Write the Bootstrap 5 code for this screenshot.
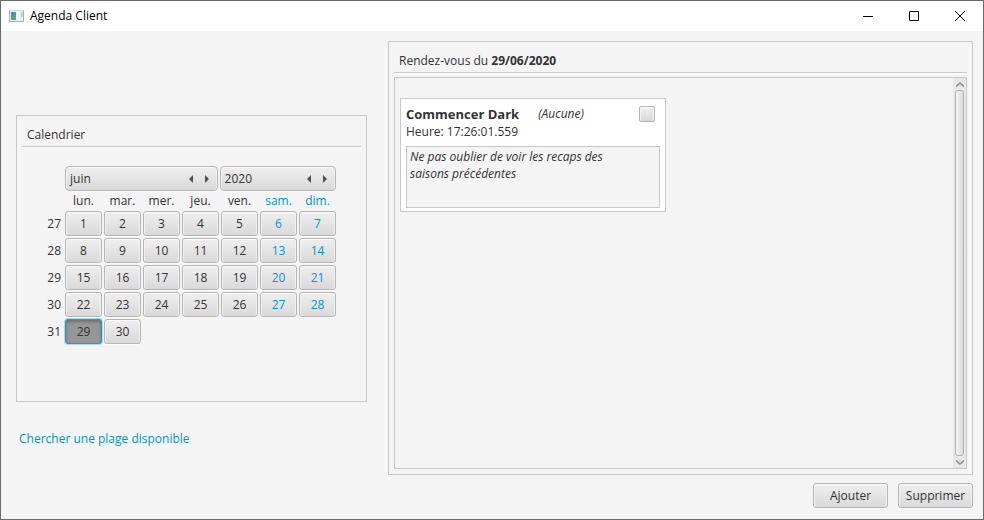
<!DOCTYPE html>
<html lang="fr">
<head>
<meta charset="utf-8">
<meta name="viewport" content="width=device-width, initial-scale=1">
<title>Agenda Client</title>
<link href="https://cdn.jsdelivr.net/npm/bootstrap@5.3.0/dist/css/bootstrap.min.css" rel="stylesheet">
<style>
  body { font: 12px/16px "Open Sans", "Noto Sans", sans-serif; color: #333; background: #f4f4f4; }
  .app-window { min-height: 100vh; border: 1px solid #6b6b6b; }
  .title-bar { height: 30px; background: #fff; color: #000; padding-left: 8px; }
  .title-bar button { width: 46px; height: 30px; border: 0; background: none; padding: 0; }
  .app-name { margin-left: 5px; }
  .title-bar svg, .spin-box svg, .scroll-track svg { display: block; margin: auto; }
  .workspace { padding: 10px 10px 11px 15px; gap: 21px; }
  .left-side { flex: 3 1 0; min-width: 0; padding-top: 74px; }
  .right-side { flex: 5 1 0; min-width: 0; }
  .frame { border: 1px solid #c8c8c8; padding: 5px; }
  .frame-title { height: 26px; padding: 6px 5px 0; font-size: 12px; line-height: 16px; margin: 0; font-weight: 400; border-bottom: 1px solid #c8c8c8; box-shadow: 0 1px #fff; }
  .calendar-frame { min-height: 287px; }
  .calendar { width: 289px; margin: 19px auto 0; }
  .fx { border: 1px solid #b5b5b5; border-radius: 3px; background: linear-gradient(#efefef, #d9d9d9); box-shadow: inset 0 1px #fcfcfc, inset 1px 0 #f2f2f2, inset -1px 0 #f2f2f2, 0 1px #fafafa; color: #333; padding: 0; }
  .spins { margin-left: 18px; gap: 2px; }
  .spin-box { height: 25px; padding: 0 2px 0 4px; border-radius: 4px; }
  .spin-box button { width: 16px; height: 21px; border: 0; padding: 0; background: none; }
  .month-box { flex: 4 1 0; }
  .year-box { flex: 3 1 0; }
  .days { border-collapse: separate; border-spacing: 0; table-layout: fixed; }
  .days th, .days td { padding: 0 0 2px 2px; text-align: center; font-weight: 400; height: 27px; }
  .days thead th { height: 20px; padding-bottom: 0; }
  .days .week { width: 16px; padding-left: 0; padding-right: 2px; text-align: right; }
  .days button { display: block; width: 100%; height: 25px; }
  .days .weekend, .days .weekend button { color: #0096c9; }
  .days button.chosen { background: #969696; border-color: #1c9bc9; box-shadow: inset 0 2px 3px #707070, 0 0 0 1px #a9dcec; }
  .find-link { color: #0096c9; text-decoration: none; margin: 29px 3px 0; }
  .scroll-box { border: 1px solid #c8c8c8; margin-top: 4px; }
  .entries { padding: 20px 5px; }
  .entry { width: 266px; background: #fff; border: 1px solid #c8c8c8; padding: 5px 5px 3px; }
  .entry h2 { font-size: 13px; line-height: 20px; font-weight: 700; margin: 0; }
  .entry-kind { margin-left: 19px; }
  .entry-check { appearance: none; width: 16px; height: 16px; margin-right: 5px; border-radius: 2px; }
  .entry-note { width: 100%; height: 62px; border: 1px solid #c8c8c8; background: #f4f4f4; color: #333; resize: none; overflow: hidden; font-style: italic; line-height: 17px; padding: 1px 44px 0 3px; margin-top: 6px; display: block; }
  .scroll-track { width: 13px; background: #e8e8e8; }
  .scroll-track button { width: 13px; height: 12px; border: 0; padding: 0; background: none; }
  .scroll-thumb { width: 9px; margin: 0 auto; border: 1px solid #b0b0b0; border-radius: 3px; background: linear-gradient(90deg, #f4f4f4, #dadada); }
  .actions { gap: 10px; margin-top: 8px; }
  .actions button { width: 75px; height: 25px; }
</style>
</head>
<body>
<div class="app-window d-flex flex-column">
  <header class="title-bar d-flex align-items-center">
    <svg class="flex-shrink-0 m-0" width="16" height="14" viewBox="0 0 16 14" aria-hidden="true">
      <defs><linearGradient id="tint" x2="0.4" y2="1"><stop stop-color="#4b86b4"/><stop offset="1" stop-color="#58a87c"/></linearGradient></defs>
      <path d="M.5 1.5h14v11H.5z" fill="#eceff1" stroke="#aab1b6"/>
      <path d="M1 1.5h13" stroke="#d5dadd"/>
      <path d="M2 3h5v8H2z" fill="url(#tint)"/>
      <path d="M8 3h3v8H8z" fill="#f9fafa"/>
      <path d="M12 3h2v5h-2z" fill="#b8d5c1"/>
    </svg>
    <span class="app-name me-auto">Agenda Client</span>
    <button type="button" aria-label="Réduire"><svg width="10" height="10"><path d="M0 5.500h10" stroke="#000"/></svg></button>
    <button type="button" aria-label="Agrandir"><svg width="10" height="10"><path d="M.5.5h9v9h-9z" fill="none" stroke="#000"/></svg></button>
    <button type="button" aria-label="Fermer"><svg width="10" height="10"><path d="M0 0l10 10M10 0L0 10" stroke="#000"/></svg></button>
  </header>

  <main class="workspace d-flex flex-grow-1">
    <div class="left-side d-flex flex-column align-items-stretch">
      <section class="frame calendar-frame">
        <h1 class="frame-title">Calendrier</h1>
        <div class="calendar">
          <div class="spins d-flex">
            <div class="fx spin-box month-box d-flex align-items-center">
              <span class="me-auto">juin</span>
              <button type="button" aria-label="Mois précédent"><svg width="4" height="8"><path d="M4 0v8L0 4z" fill="#505050"/></svg></button>
              <button type="button" aria-label="Mois suivant"><svg width="4" height="8"><path d="M0 0v8l4-4z" fill="#505050"/></svg></button>
            </div>
            <div class="fx spin-box year-box d-flex align-items-center">
              <span class="me-auto">2020</span>
              <button type="button" aria-label="Année précédente"><svg width="4" height="8"><path d="M4 0v8L0 4z" fill="#505050"/></svg></button>
              <button type="button" aria-label="Année suivante"><svg width="4" height="8"><path d="M0 0v8l4-4z" fill="#505050"/></svg></button>
            </div>
          </div>
          <table class="days w-100">
            <thead>
              <tr><th class="week"></th><th>lun.</th><th>mar.</th><th>mer.</th><th>jeu.</th><th>ven.</th><th class="weekend">sam.</th><th class="weekend">dim.</th></tr>
            </thead>
            <tbody>
              <tr><th class="week">27</th><td><button type="button" class="fx">1</button></td><td><button type="button" class="fx">2</button></td><td><button type="button" class="fx">3</button></td><td><button type="button" class="fx">4</button></td><td><button type="button" class="fx">5</button></td><td class="weekend"><button type="button" class="fx">6</button></td><td class="weekend"><button type="button" class="fx">7</button></td></tr>
              <tr><th class="week">28</th><td><button type="button" class="fx">8</button></td><td><button type="button" class="fx">9</button></td><td><button type="button" class="fx">10</button></td><td><button type="button" class="fx">11</button></td><td><button type="button" class="fx">12</button></td><td class="weekend"><button type="button" class="fx">13</button></td><td class="weekend"><button type="button" class="fx">14</button></td></tr>
              <tr><th class="week">29</th><td><button type="button" class="fx">15</button></td><td><button type="button" class="fx">16</button></td><td><button type="button" class="fx">17</button></td><td><button type="button" class="fx">18</button></td><td><button type="button" class="fx">19</button></td><td class="weekend"><button type="button" class="fx">20</button></td><td class="weekend"><button type="button" class="fx">21</button></td></tr>
              <tr><th class="week">30</th><td><button type="button" class="fx">22</button></td><td><button type="button" class="fx">23</button></td><td><button type="button" class="fx">24</button></td><td><button type="button" class="fx">25</button></td><td><button type="button" class="fx">26</button></td><td class="weekend"><button type="button" class="fx">27</button></td><td class="weekend"><button type="button" class="fx">28</button></td></tr>
              <tr><th class="week">31</th><td><button type="button" class="fx chosen" aria-pressed="true">29</button></td><td><button type="button" class="fx">30</button></td><td></td><td></td><td></td><td></td><td></td></tr>
            </tbody>
          </table>
        </div>
      </section>
      <a class="find-link align-self-start" href="#">Chercher une plage disponible</a>
    </div>

    <div class="right-side d-flex flex-column">
      <section class="frame d-flex flex-column flex-grow-1">
        <h1 class="frame-title">Rendez-vous du <strong>29/06/2020</strong></h1>
        <div class="scroll-box d-flex flex-grow-1">
          <div class="entries flex-grow-1">
            <article class="entry">
              <div class="d-flex align-items-center">
                <h2>Commencer Dark</h2>
                <em class="entry-kind me-auto">(Aucune)</em>
                <input class="fx entry-check" type="checkbox" aria-label="Commencer Dark terminé">
              </div>
              <div>Heure: 17:26:01.559</div>
              <textarea class="entry-note" readonly aria-label="Description">Ne pas oublier de voir les recaps des saisons précédentes</textarea>
            </article>
          </div>
          <div class="scroll-track d-flex flex-column">
            <button type="button" aria-label="Défiler vers le haut"><svg width="8" height="5"><path d="M0 4.500l4-3.500 4 3.500" fill="none" stroke="#8c8c8c" stroke-width="1.500"/></svg></button>
            <div class="scroll-thumb flex-grow-1"></div>
            <button type="button" aria-label="Défiler vers le bas"><svg width="8" height="5"><path d="M0 .5l4 3.500 4-3.500" fill="none" stroke="#8c8c8c" stroke-width="1.500"/></svg></button>
          </div>
        </div>
      </section>
      <div class="actions d-flex justify-content-end">
        <button type="button" class="fx">Ajouter</button>
        <button type="button" class="fx">Supprimer</button>
      </div>
    </div>
  </main>
</div>
<script src="https://cdn.jsdelivr.net/npm/bootstrap@5.3.0/dist/js/bootstrap.bundle.min.js"></script>
</body>
</html>
